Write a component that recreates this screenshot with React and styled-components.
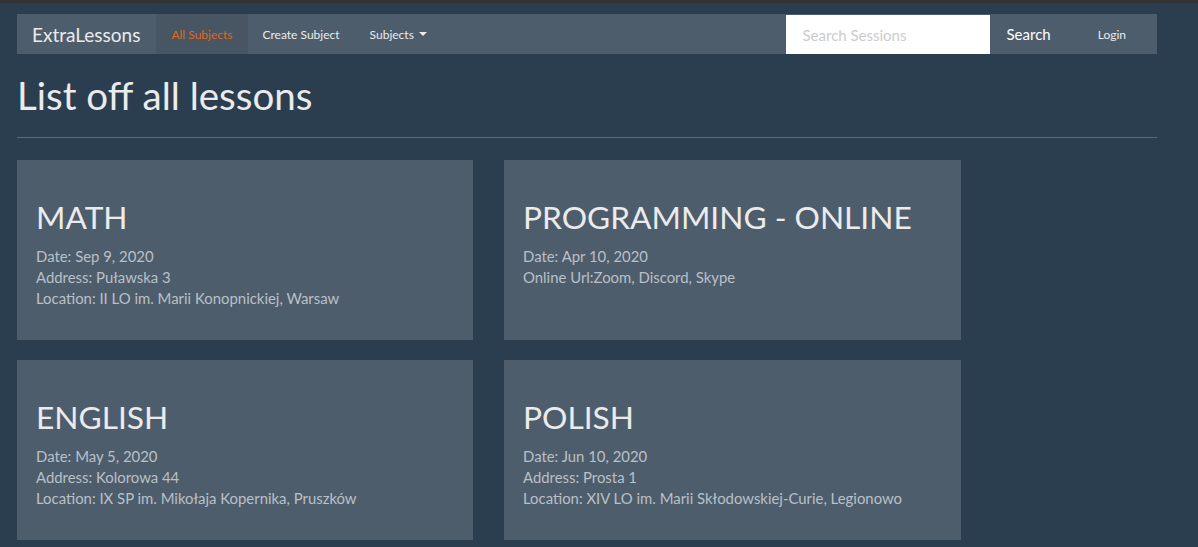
import styled, { createGlobalStyle } from "styled-components";

const GlobalStyle = createGlobalStyle`
  html, body {
    margin: 0;
    padding: 0;
    background: #2b3e50;
    font-family: Lato, "Open Sans", "Liberation Sans", sans-serif;
    color: #ebebeb;
  }
`;

const TopStrip = styled.div`
  height: 3px;
  background: #333;
`;

const Page = styled.div`
  width: 1140px;
  margin-left: 17px;
  padding-top: 11px;
`;

const Navbar = styled.nav`
  display: flex;
  align-items: stretch;
  height: 40px;
  background: #4e5d6c;
`;

const Brand = styled.a`
  display: flex;
  align-items: center;
  padding: 0 16px 0 15px;
  font-size: 19px;
  color: #ebebeb;
  text-decoration: none;
`;

const NavLink = styled.a`
  display: flex;
  align-items: center;
  padding: 0 15px;
  font-size: 12px;
  text-decoration: none;
  color: ${(p) => (p.$active ? "#df691a" : "#ebebeb")};
  background: ${(p) => (p.$active ? "#485563" : "transparent")};
`;

const Caret = styled.span`
  display: inline-block;
  margin-left: 5px;
  width: 0;
  height: 0;
  border-left: 4px solid transparent;
  border-right: 4px solid transparent;
  border-top: 4px solid #ebebeb;
`;

const RightGroup = styled.div`
  display: flex;
  align-items: stretch;
  margin-left: auto;
  margin-right: 16px;
`;

const SearchInput = styled.input`
  width: 204px;
  height: 39px;
  margin-top: 1px;
  margin-right: 2px;
  box-sizing: border-box;
  border: none;
  outline: none;
  padding: 0 17px;
  font-family: inherit;
  font-size: 15px;
  background: #fff;
  color: #333;
  &::placeholder {
    color: #cccccc;
  }
`;

const SearchButton = styled.button`
  border: none;
  background: transparent;
  color: #fff;
  font-family: inherit;
  font-size: 15px;
  padding: 0 17px 0 15px;
  margin-right: 15px;
`;

const Heading = styled.h1`
  margin: 20px 0 0;
  font-size: 38.5px;
  font-weight: 400;
  line-height: 43px;
  color: #ebebeb;
`;

const Rule = styled.hr`
  margin: 20px 0 22px;
  border: none;
  border-top: 1px solid #596a7b;
`;

const Grid = styled.div`
  display: grid;
  grid-template-columns: 456px 457px;
  column-gap: 31px;
  row-gap: 20px;
`;

const Card = styled.div`
  height: 180px;
  box-sizing: border-box;
  padding: 40px 19px 0;
  background: #4e5d6c;
`;

const CardTitle = styled.h2`
  margin: 0 0 11px;
  font-size: 31.7px;
  font-weight: 400;
  line-height: 35px;
  color: #ebebeb;
`;

const Line = styled.div`
  font-size: 14.9px;
  line-height: 21px;
  color: #b9c0c7;
`;

const lessons = [
  {
    title: "MATH",
    lines: ["Date: Sep 9, 2020", "Address: Puławska 3", "Location: II LO im. Marii Konopnickiej, Warsaw"],
  },
  {
    title: "PROGRAMMING - ONLINE",
    lines: ["Date: Apr 10, 2020", "Online Url:Zoom, Discord, Skype"],
  },
  {
    title: "ENGLISH",
    lines: ["Date: May 5, 2020", "Address: Kolorowa 44", "Location: IX SP im. Mikołaja Kopernika, Pruszków"],
  },
  {
    title: "POLISH",
    lines: ["Date: Jun 10, 2020", "Address: Prosta 1", "Location: XIV LO im. Marii Skłodowskiej-Curie, Legionowo"],
  },
];

export default function App() {
  return (
    <>
      <GlobalStyle />
      <TopStrip />
      <Page>
        <Navbar>
          <Brand href="#">ExtraLessons</Brand>
          <NavLink href="#" $active>All Subjects</NavLink>
          <NavLink href="#">Create Subject</NavLink>
          <NavLink href="#">Subjects<Caret /></NavLink>
          <RightGroup>
            <SearchInput placeholder="Search Sessions" />
            <SearchButton>Search</SearchButton>
            <NavLink href="#">Login</NavLink>
          </RightGroup>
        </Navbar>
        <Heading>List off all lessons</Heading>
        <Rule />
        <Grid>
          {lessons.map((l) => (
            <Card key={l.title}>
              <CardTitle>{l.title}</CardTitle>
              {l.lines.map((t) => (
                <Line key={t}>{t}</Line>
              ))}
            </Card>
          ))}
        </Grid>
      </Page>
    </>
  );
}
